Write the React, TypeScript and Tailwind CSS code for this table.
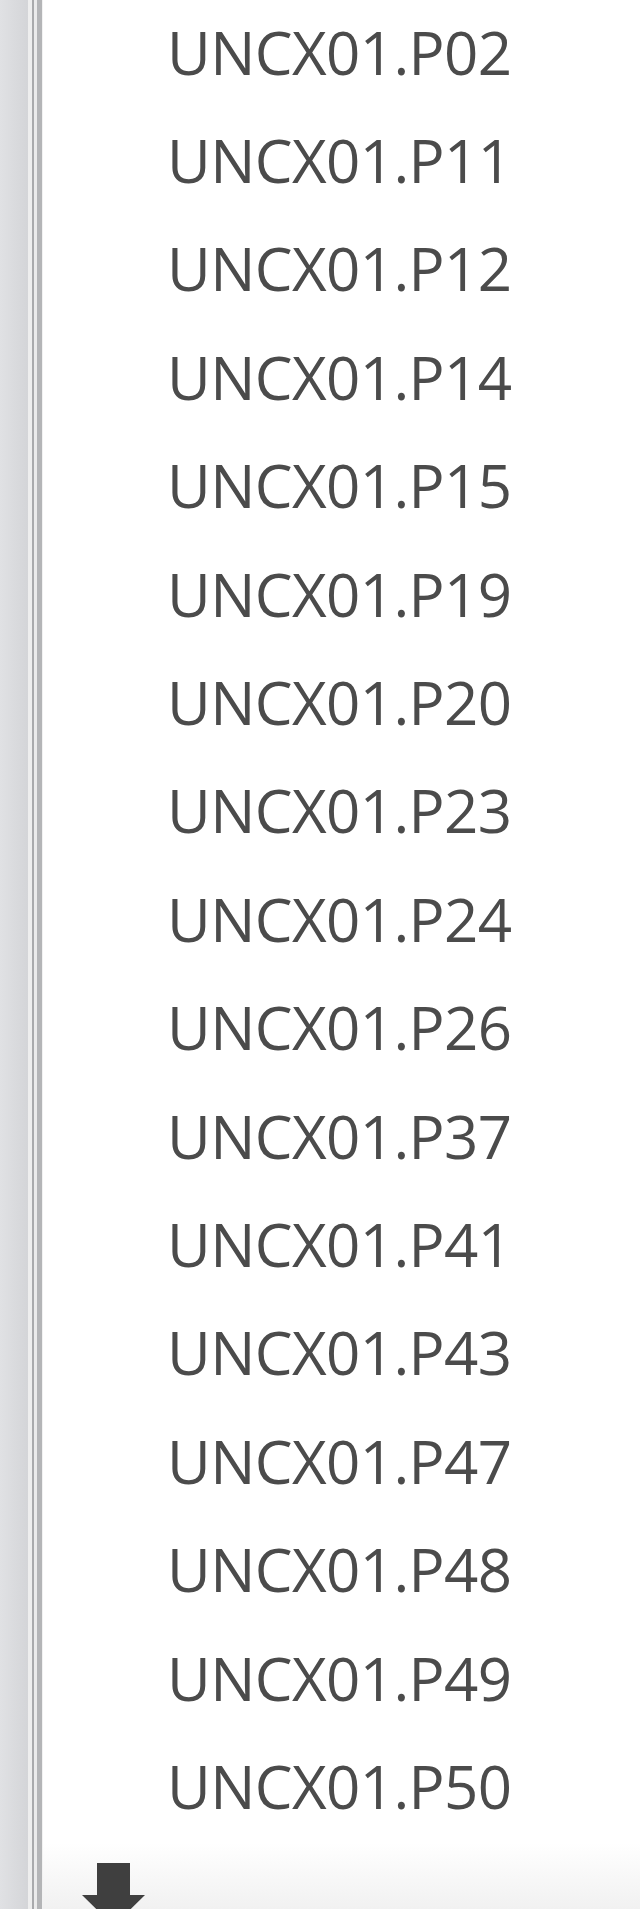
import React from "react";

const items = [
  "UNCX01.P02",
  "UNCX01.P11",
  "UNCX01.P12",
  "UNCX01.P14",
  "UNCX01.P15",
  "UNCX01.P19",
  "UNCX01.P20",
  "UNCX01.P23",
  "UNCX01.P24",
  "UNCX01.P26",
  "UNCX01.P37",
  "UNCX01.P41",
  "UNCX01.P43",
  "UNCX01.P47",
  "UNCX01.P48",
  "UNCX01.P49",
  "UNCX01.P50",
];

export default function App() {
  return (
    <div className="flex h-[1909px] w-[640px] overflow-hidden bg-white">
      <div className="flex h-full shrink-0">
        <div className="h-full w-[28px] bg-gradient-to-r from-[#e0e1e4] to-[#d4d5d8]" />
        <div className="h-full w-[4px] bg-[#eeeeee]" />
        <div className="h-full w-[2px] bg-[#a9aaac]" />
        <div className="h-full w-[3px] bg-[#ebebeb]" />
        <div className="h-full w-[5px] bg-[#b4b5b7]" />
        <div className="h-full w-[1px] bg-[#f2f2f2]" />
      </div>
      <div className="flex h-full flex-1 flex-col">
        <div className="flex flex-col">
          {items.map((t) => (
            <div
              key={t}
              className="flex h-[108.4px] items-center pb-[5px] pl-[124px] text-[60px] leading-none tracking-[-0.6px] text-[#4b4b4b]"
              style={{ fontFamily: '"Open Sans", "Noto Sans", sans-serif' }}
            >
              {t}
            </div>
          ))}
        </div>
        <div className="relative flex-1 overflow-hidden bg-gradient-to-b from-white to-[#f1f1f1]">
          <svg
            className="absolute left-[39px] top-[20px]"
            width="64"
            height="64"
            viewBox="0 0 64 64"
          >
            <polygon
              points="15,0 48,0 48,32 63,32 31.5,63 0,32 15,32"
              fill="#3f3f3f"
            />
          </svg>
        </div>
      </div>
    </div>
  );
}
